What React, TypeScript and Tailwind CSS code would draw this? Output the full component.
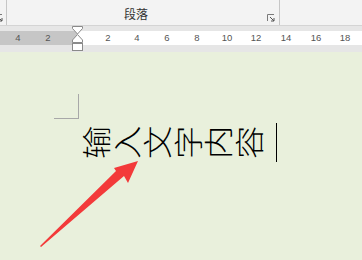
import React from "react";

const rulerMarks = [
  { x: 18, t: "4" },
  { x: 48, t: "2" },
  { x: 108, t: "2" },
  { x: 137, t: "4" },
  { x: 167, t: "6" },
  { x: 197, t: "8" },
  { x: 227, t: "10" },
  { x: 256, t: "12" },
  { x: 286, t: "14" },
  { x: 316, t: "16" },
  { x: 345, t: "18" },
];

const chars = ["输", "入", "文", "字", "内", "容"];

function Launcher() {
  return (
    <svg width="8" height="8" viewBox="0 0 8 8">
      <path d="M0.5 7V0.5H7" fill="none" stroke="#7a7a7a" />
      <path d="M3 3L7 7M7 4V7H4" fill="none" stroke="#555" />
    </svg>
  );
}

function IndentMarker() {
  return (
    <svg width="12" height="26" viewBox="0 0 12 26" className="absolute left-[72px] top-0">
      <path d="M0.5 0.5H10.5V2.5L5.5 8L0.5 2.5Z" fill="#fff" stroke="#8a8a8a" />
      <path d="M5.5 8.5L10.5 14V16.5H0.5V14Z" fill="#fff" stroke="#8a8a8a" />
      <rect x="0.5" y="17.5" width="10" height="7" fill="#fff" stroke="#8a8a8a" />
    </svg>
  );
}

export default function App() {
  return (
    <div
      className="w-[362px] h-[260px] flex flex-col overflow-hidden bg-[#e9f0dc]"
      style={{ fontFamily: '"Liberation Sans", "Noto Sans CJK SC", sans-serif' }}
    >
      <div className="h-[26px] shrink-0 bg-[#f3f3f3] border-b border-[#d4d4d4] flex items-stretch">
        <div className="w-[7px] border-r border-[#c6c6c6] flex items-end pb-[3px]">
          <div className="-ml-[5px]">
            <Launcher />
          </div>
        </div>
        <div className="w-[273px] border-r border-[#c6c6c6] flex items-center justify-between pr-[4px]">
          <span className="ml-[117px] mt-[4px] text-[12px] text-[#333] leading-none">段落</span>
          <div className="self-end pb-[3px]">
            <Launcher />
          </div>
        </div>
        <div className="flex-1" />
      </div>
      <div className="h-[26px] shrink-0 bg-[#e6e6e6] pt-[5px] relative">
        <div className="h-[14px] flex">
          <div className="w-[77px] bg-[#c6c6c6]" />
          <div className="flex-1 bg-white" />
        </div>
        <div className="absolute left-0 top-[5px] h-[14px] w-full">
          {rulerMarks.map((m) => (
            <span
              key={m.x}
              className="absolute top-0 -translate-x-1/2 text-[9.5px] leading-[14px] text-[#555]"
              style={{ left: m.x }}
            >
              {m.t}
            </span>
          ))}
        </div>
        <IndentMarker />
      </div>
      <div className="flex-1 relative">
        <div className="ml-[54px] mt-[42px] w-[25px] h-[25px] border-r border-b border-[#a8a8a8]" />
        <div className="flex items-center pl-[80px] mt-[2px] h-[42px]">
          {chars.map((c) => (
            <span
              key={c}
              className="w-[30.5px] h-[30.5px] flex items-center justify-center text-[29px] leading-none text-black"
              style={{
                fontFamily: '"Noto Sans CJK SC", serif',
                fontWeight: 300,
                transform: "rotate(-90deg) scaleX(1.15)",
              }}
            >
              {c}
            </span>
          ))}
          <span className="ml-[13px] w-px h-[39px] bg-black" />
        </div>
        <svg
          className="absolute left-0 top-0"
          width="362"
          height="208"
          viewBox="0 52 362 208"
        >
          <path d="M138 161L128 183L124 176L41 247L40 246L116 171L114 168Z" fill="#f33a3a" />
        </svg>
      </div>
    </div>
  );
}
